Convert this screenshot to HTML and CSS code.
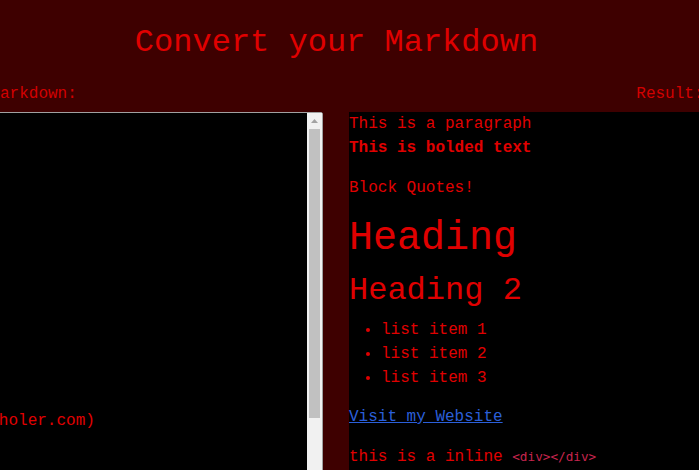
FILE: index.html
```html
<!DOCTYPE html>
<html lang="en">
<head>
<meta charset="utf-8">
<title>Convert your Markdown</title>
<link rel="stylesheet" href="styles.css">
</head>
<body>
<header class="top">
  <h1 class="title">Convert your Markdown</h1>
</header>
<div class="labels">
  <span class="label">Markdown:</span>
  <span class="label">Result:</span>
</div>
<main class="panes">
  <div class="editor-box">
<textarea class="editor" wrap="off" spellcheck="false">
This is a paragraph
**This is bolded text**

> Block Quotes!

# Heading
## Heading 2

* list item 1
* list item 2
* list item 3

[Visit my Website](http://www.danielscholer.com)

this is a inline &lt;div&gt;&lt;/div&gt;
</textarea>
    <div class="scrollbar">
      <div class="scroll-btn">
        <svg class="arrow" width="7" height="4" viewBox="0 0 7 4"><path d="M0 4 L3.5 0 L7 4 Z" fill="#a3a3a3"/></svg>
      </div>
      <div class="scroll-track"><div class="scroll-thumb"></div></div>
    </div>
  </div>
  <section class="preview">
    <p class="para">This is a paragraph<br><strong>This is bolded text</strong></p>
    <blockquote class="quote">Block Quotes!</blockquote>
    <h1 class="h-one">Heading</h1>
    <h2 class="h-two">Heading 2</h2>
    <ul class="list">
      <li>list item 1</li>
      <li>list item 2</li>
      <li>list item 3</li>
    </ul>
    <p class="link-para"><a class="link" href="#">Visit my Website</a></p>
    <p class="inline-para">this is a inline <code class="code">&lt;div&gt;&lt;/div&gt;</code></p>
  </section>
</main>
</body>
</html>
```
FILE: styles.css
```css
html, body {
  margin: 0;
  padding: 0;
  height: 100%;
  overflow: hidden;
  background: #3e0000;
}

body {
  font-family: "Liberation Mono", "Courier New", monospace;
  color: #e00000;
}

.top {
  padding-top: 25px;
  padding-right: 26px;
  text-align: center;
}

.title {
  margin: 0;
  font-size: 32px;
  line-height: 36px;
  font-weight: normal;
  color: #e00000;
}

.labels {
  display: flex;
  justify-content: space-between;
  margin: 24px -4.5px 0 -9.6px;
  font-size: 16px;
  line-height: 18px;
  color: #d20000;
}

.panes {
  display: flex;
  gap: 26px;
  margin-top: 9px;
  margin-left: -369px;
  height: 398px;
}

.editor-box {
  box-sizing: border-box;
  flex: 0 0 692px;
  display: flex;
  height: 100%;
  border: 1px solid #a0a0a0;
  border-radius: 2px 2px 0 0;
  background: #000;
}

.editor {
  flex: 1;
  min-width: 0;
  height: 100%;
  margin: 0;
  padding: 8px 2px 0 2px;
  border: none;
  background: #000;
  color: #e00000;
  font-family: "Liberation Mono", "Courier New", monospace;
  font-size: 16px;
  line-height: 24px;
  resize: none;
  overflow: hidden;
  outline: none;
}

.scrollbar {
  flex: 0 0 15px;
  display: flex;
  flex-direction: column;
  background: #f1f1f1;
}

.scroll-btn {
  height: 16px;
  display: flex;
  align-items: center;
  justify-content: center;
}

.arrow {
  display: block;
}

.scroll-track {
  flex: 1;
  padding: 0 2px;
}

.scroll-thumb {
  height: 289px;
  background: #c1c1c1;
}

.preview {
  flex: 1;
  min-width: 0;
  background: #000;
  font-size: 16px;
  line-height: 24px;
  color: #e00000;
}

.para {
  margin: 0;
}

.quote {
  margin: 16px 0 0 0;
}

.h-one {
  margin: 15px 0 0 0;
  font-size: 40px;
  line-height: 48px;
  font-weight: normal;
}

.h-two {
  margin: 8px 0 0 0;
  font-size: 32px;
  line-height: 40px;
  font-weight: normal;
}

.list {
  margin: 7px 0 0 0;
  padding-left: 32px;
}

.link-para {
  margin: 15px 0 0 0;
}

.link {
  color: #2b5fd9;
}

.inline-para {
  margin: 16px 0 0 0;
}

.code {
  font-family: "DejaVu Sans Mono", monospace;
  font-size: 12.7px;
  color: #c7254e;
}
```
